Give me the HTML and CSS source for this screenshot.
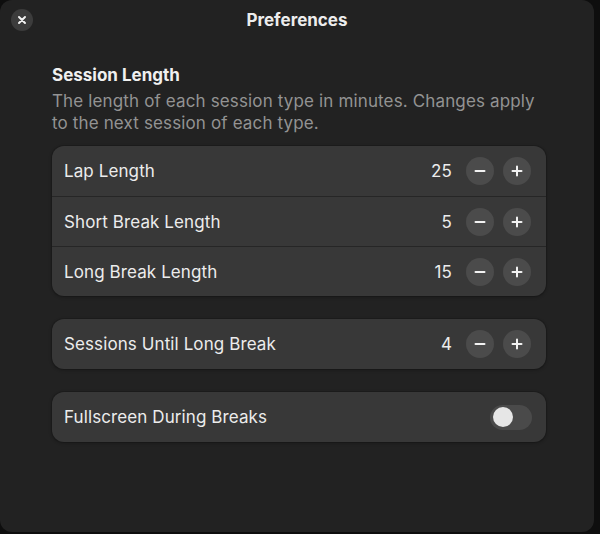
FILE: index.html
```html
<!DOCTYPE html>
<html lang="en">
<head>
<meta charset="utf-8">
<title>Preferences</title>
<link rel="stylesheet" href="styles.css">
</head>
<body>
<div class="window">
  <header class="headerbar">
    <div class="hb-start">
      <button class="close-btn" aria-label="Close">
        <svg width="10" height="10" viewBox="0 0 10 10"><path d="M2 2 L8 8 M8 2 L2 8" stroke="#f2f2f2" stroke-width="2" stroke-linecap="round"/></svg>
      </button>
    </div>
    <div class="title">Preferences</div>
    <div class="hb-end"></div>
  </header>
  <main class="content">
    <section class="group">
      <h2 class="group-title">Session Length</h2>
      <p class="group-desc">The length of each session type in minutes. Changes apply to the next session of each type.</p>
      <div class="card">
        <div class="row">
          <span class="label">Lap Length</span>
          <span class="value">25</span>
          <button class="round-btn" aria-label="Decrease"><svg width="12" height="12" viewBox="0 0 12 12"><path d="M1.5 6 H10.5" stroke="#f2f2f2" stroke-width="2" stroke-linecap="round"/></svg></button>
          <button class="round-btn" aria-label="Increase"><svg width="12" height="12" viewBox="0 0 12 12"><path d="M1.5 6 H10.5 M6 1.5 V10.5" stroke="#f2f2f2" stroke-width="2" stroke-linecap="round"/></svg></button>
        </div>
        <div class="row">
          <span class="label">Short Break Length</span>
          <span class="value">5</span>
          <button class="round-btn" aria-label="Decrease"><svg width="12" height="12" viewBox="0 0 12 12"><path d="M1.5 6 H10.5" stroke="#f2f2f2" stroke-width="2" stroke-linecap="round"/></svg></button>
          <button class="round-btn" aria-label="Increase"><svg width="12" height="12" viewBox="0 0 12 12"><path d="M1.5 6 H10.5 M6 1.5 V10.5" stroke="#f2f2f2" stroke-width="2" stroke-linecap="round"/></svg></button>
        </div>
        <div class="row">
          <span class="label">Long Break Length</span>
          <span class="value">15</span>
          <button class="round-btn" aria-label="Decrease"><svg width="12" height="12" viewBox="0 0 12 12"><path d="M1.5 6 H10.5" stroke="#f2f2f2" stroke-width="2" stroke-linecap="round"/></svg></button>
          <button class="round-btn" aria-label="Increase"><svg width="12" height="12" viewBox="0 0 12 12"><path d="M1.5 6 H10.5 M6 1.5 V10.5" stroke="#f2f2f2" stroke-width="2" stroke-linecap="round"/></svg></button>
        </div>
      </div>
    </section>
    <section class="card">
      <div class="row">
        <span class="label">Sessions Until Long Break</span>
        <span class="value">4</span>
        <button class="round-btn" aria-label="Decrease"><svg width="12" height="12" viewBox="0 0 12 12"><path d="M1.5 6 H10.5" stroke="#f2f2f2" stroke-width="2" stroke-linecap="round"/></svg></button>
        <button class="round-btn" aria-label="Increase"><svg width="12" height="12" viewBox="0 0 12 12"><path d="M1.5 6 H10.5 M6 1.5 V10.5" stroke="#f2f2f2" stroke-width="2" stroke-linecap="round"/></svg></button>
      </div>
    </section>
    <section class="card">
      <div class="row">
        <span class="label">Fullscreen During Breaks</span>
        <span class="switch" role="switch" aria-checked="false"><span class="knob"></span></span>
      </div>
    </section>
  </main>
</div>
</body>
</html>
```

FILE: styles.css
```css
* { box-sizing: border-box; }

html, body {
  margin: 0;
  padding: 0;
  background: #0e0e0e;
  width: 600px;
  height: 534px;
  overflow: hidden;
}

body {
  font-family: Inter, "Noto Sans", "DejaVu Sans", sans-serif;
  color: #f0f0f0;
}

.window {
  width: 594px;
  height: 532px;
  background: #222222;
  border-radius: 12px;
  display: flex;
  flex-direction: column;
}

.headerbar {
  height: 40px;
  display: grid;
  grid-template-columns: 1fr auto 1fr;
  align-items: center;
  padding: 0 11px;
}

.hb-start { display: flex; align-items: center; }

.close-btn {
  width: 22px;
  height: 22px;
  border-radius: 50%;
  border: none;
  padding: 0;
  background: #3c3c3c;
  display: flex;
  align-items: center;
  justify-content: center;
}

.title {
  font-size: 17px;
  font-weight: 700;
  color: #ededed;
}

.content {
  padding: 25px 48px 0 52px;
  display: flex;
  flex-direction: column;
  gap: 23px;
}

.group { display: flex; flex-direction: column; }

.group-title {
  margin: 0;
  font-size: 17px;
  line-height: 20px;
  font-weight: 700;
  color: #f0f0f0;
}

.group-desc {
  margin: 5px 0 12px;
  font-size: 17px;
  line-height: 22px;
  letter-spacing: 0.14px;
  color: #939393;
}

.card {
  background: #383838;
  border-radius: 12px;
  box-shadow: 0 0 0 1px rgba(0,0,0,0.12), 0 1px 3px 1px rgba(0,0,0,0.18);
  display: flex;
  flex-direction: column;
}

.row {
  height: 50px;
  display: flex;
  align-items: center;
  padding: 0 15px 0 12px;
  font-size: 17px;
  letter-spacing: 0.1px;
}

.row + .row { border-top: 1px solid #262626; }

.label { flex: 1; color: #ececec; }

.value {
  color: #ececec;
  margin-right: 14px;
}

.round-btn {
  width: 28px;
  height: 28px;
  border-radius: 50%;
  border: none;
  padding: 0;
  background: #4b4b4b;
  display: flex;
  align-items: center;
  justify-content: center;
}

.round-btn + .round-btn { margin-left: 9px; }

.switch {
  width: 42px;
  height: 25px;
  border-radius: 13px;
  background: #4a4a4a;
  display: flex;
  align-items: center;
  padding: 0 3px;
  margin-right: -1px;
}

.knob {
  width: 20px;
  height: 20px;
  border-radius: 50%;
  background: #e6e6e6;
}
```
